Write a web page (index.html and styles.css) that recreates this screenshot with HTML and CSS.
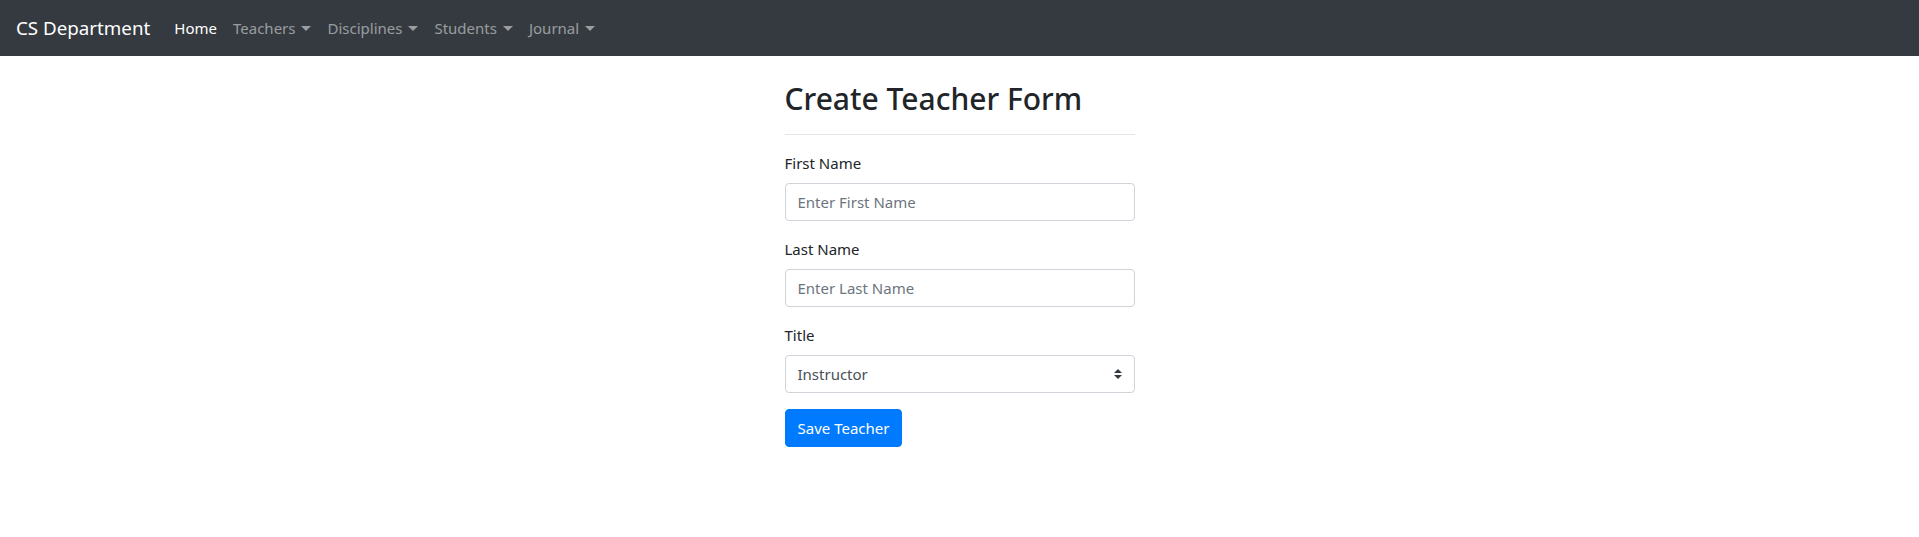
FILE: index.html
```html
<!DOCTYPE html>
<html lang="en">
<head>
<meta charset="utf-8">
<title>CS Department</title>
<link rel="stylesheet" href="styles.css">
</head>
<body>
<nav class="navbar">
  <a class="brand" href="#">CS Department</a>
  <ul class="nav">
    <li><a class="nav-link active" href="#">Home</a></li>
    <li><a class="nav-link dropdown" href="#">Teachers</a></li>
    <li><a class="nav-link dropdown" href="#">Disciplines</a></li>
    <li><a class="nav-link dropdown" href="#">Students</a></li>
    <li><a class="nav-link dropdown" href="#">Journal</a></li>
  </ul>
</nav>
<main class="container">
  <div class="col">
    <h2 class="title">Create Teacher Form</h2>
    <hr class="rule">
    <form class="form">
      <div class="form-group">
        <label class="label" for="fn">First Name</label>
        <input class="control" id="fn" type="text" placeholder="Enter First Name">
      </div>
      <div class="form-group">
        <label class="label" for="ln">Last Name</label>
        <input class="control" id="ln" type="text" placeholder="Enter Last Name">
      </div>
      <div class="form-group">
        <label class="label" for="tt">Title</label>
        <select class="control select" id="tt">
          <option>Instructor</option>
          <option>Assistant</option>
          <option>Professor</option>
        </select>
      </div>
      <button class="btn" type="button">Save Teacher</button>
    </form>
  </div>
</main>
</body>
</html>
```
FILE: styles.css
```css
* { box-sizing: border-box; }
html, body { margin: 0; padding: 0; }
body {
  font-family: "Noto Sans", "Open Sans", sans-serif;
  font-size: 16px;
  line-height: 1.5;
  color: #212529;
  background: #fff;
}
.navbar {
  background: #343a40;
  height: 56px;
  display: flex;
  align-items: center;
  padding: 8px 16px;
}
.brand {
  color: #fff;
  text-decoration: none;
  font-size: 18.75px;
  line-height: 30px;
  margin-right: 16px;
}
.nav {
  list-style: none;
  margin: 0;
  padding: 0;
  display: flex;
}
.nav-link {
  display: block;
  padding: 8px 8px;
  color: rgba(255,255,255,.5);
  text-decoration: none;
  font-size: 15px;
}
.nav-link.active { color: #fff; }
.dropdown::after {
  content: "";
  display: inline-block;
  margin-left: 6px;
  vertical-align: 3px;
  border-top: 5px solid;
  border-left: 5px solid transparent;
  border-right: 5px solid transparent;
}
.container {
  width: 1140px;
  margin: 0 auto;
  padding: 0 15px;
  display: flex;
  justify-content: center;
}
.col { width: 350px; }
.title {
  margin: 24px 0 0;
  font-size: 30px;
  font-weight: 500;
  line-height: 38.4px;
  color: #212529;
}
.rule {
  margin: 16px 0;
  border: 0;
  border-top: 1px solid rgba(0,0,0,.1);
}
.form-group { margin-bottom: 16px; }
.label {
  display: block;
  margin-bottom: 8px;
  font-size: 15px;
  line-height: 24px;
}
.control {
  display: block;
  width: 100%;
  height: 38px;
  padding: 6px 12px;
  font-family: inherit;
  font-size: 15px;
  line-height: 24px;
  color: #495057;
  background: #fff;
  border: 1px solid #ced4da;
  border-radius: 4px;
}
.control::placeholder { color: #6c757d; }
.select {
  appearance: none;
  -webkit-appearance: none;
  padding-right: 28px;
  background: #fff url("data:image/svg+xml;charset=utf8,%3Csvg xmlns='http://www.w3.org/2000/svg' viewBox='0 0 4 5'%3E%3Cpath fill='%23343a40' d='M2 0L0 2h4zm0 5L0 3h4z'/%3E%3C/svg%3E") no-repeat right 12px center;
  background-size: 8px 10px;
}
.btn {
  display: inline-block;
  height: 38px;
  padding: 6px 12px;
  font-family: inherit;
  font-size: 15px;
  line-height: 24px;
  color: #fff;
  background: #007bff;
  border: 1px solid #007bff;
  border-radius: 4px;
}
```
